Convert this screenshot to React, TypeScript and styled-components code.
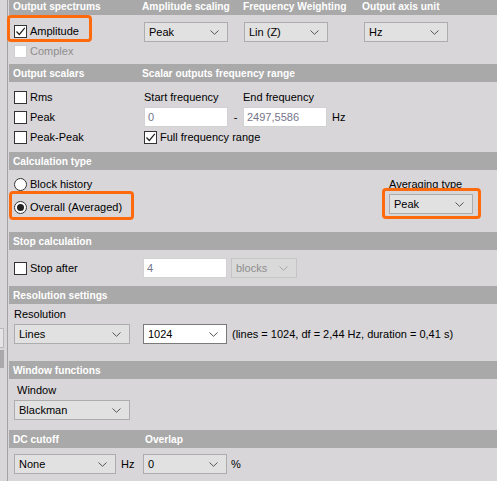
import React from "react";
import styled, { createGlobalStyle } from "styled-components";

const Global = createGlobalStyle`
  html, body { margin: 0; padding: 0; background: #d8d6d9; }
  body { font-family: "Liberation Sans", Arial, sans-serif; font-size: 11px; color: #000; }
  #root { width: 497px; height: 481px; overflow: hidden; }
  * { box-sizing: border-box; }
`;

const Layout = styled.div`
  display: flex;
  gap: 1px;
  height: 481px;
  overflow: hidden;
`;

const Strip = styled.div`
  width: 8px;
  flex: none;
  border-right: 1px solid #a2a2a2;
  display: flex;
  flex-direction: column;
  padding-top: 328px;
`;

const StubBox = styled.div`
  width: 4px;
  height: 20px;
  border: 1px solid #b9b9b9;
  border-left: none;
  background: #e4e4e4;
`;

const StubBar = styled.div`
  width: 4px;
  height: 18px;
  margin-top: 2px;
  background: #a9a9a9;
`;

const Panel = styled.div`
  flex: 1;
  display: flex;
  flex-direction: column;
  min-width: 0;
`;

const Header = styled.div<{ $cols: string; $first?: boolean }>`
  display: grid;
  grid-template-columns: ${(p) => p.$cols};
  align-items: center;
  height: 18px;
  flex: none;
  margin-top: ${(p) => (p.$first ? "-3px" : "0")};
  padding-left: 4px;
  background: #a9a9a9;
  color: #fff;
  font-weight: bold;
  font-size: 10.2px;
  white-space: nowrap;
`;

const Body = styled.div<{ $pad: string }>`
  padding: ${(p) => p.$pad};
  display: flex;
  flex: none;
`;

const Col = styled.div<{ $w?: number; $gap?: number }>`
  display: flex;
  flex-direction: column;
  gap: ${(p) => p.$gap ?? 0}px;
  width: ${(p) => (p.$w ? `${p.$w}px` : "auto")};
  flex: none;
`;

const Row = styled.div<{ $gap?: number }>`
  display: flex;
  align-items: center;
  gap: ${(p) => p.$gap ?? 0}px;
`;

const Line = styled.div<{ $h?: number; $indent?: number; $w?: number }>`
  height: ${(p) => p.$h ?? 20}px;
  line-height: ${(p) => p.$h ?? 20}px;
  padding-left: ${(p) => p.$indent ?? 0}px;
  width: ${(p) => (p.$w ? `${p.$w}px` : "auto")};
  white-space: nowrap;
`;

const Spacer = styled.div`
  flex: 1;
`;

const CheckRow = styled.label<{ $h?: number; $disabled?: boolean }>`
  display: inline-flex;
  align-items: center;
  gap: 3px;
  height: ${(p) => p.$h ?? 20}px;
  color: ${(p) => (p.$disabled ? "#8d8d8d" : "#000")};
  white-space: nowrap;
`;

const Box = styled.span<{ $disabled?: boolean }>`
  width: 13px;
  height: 13px;
  flex: none;
  background: #fff;
  border: 1px solid ${(p) => (p.$disabled ? "#cfcfcf" : "#333")};
  display: inline-flex;
  align-items: center;
  justify-content: center;
`;

const Circle = styled.span`
  width: 13px;
  height: 13px;
  flex: none;
  border-radius: 50%;
  background: #fff;
  border: 1px solid #333;
  display: inline-flex;
  align-items: center;
  justify-content: center;
`;

const Dot = styled.span`
  width: 7px;
  height: 7px;
  border-radius: 50%;
  background: #222;
`;

const Highlight = styled.div<{ $t: number; $r: number; $b: number; $l: number }>`
  position: relative;
  display: inline-flex;
  align-self: flex-start;
  &::after {
    content: "";
    position: absolute;
    top: ${(p) => p.$t}px;
    right: ${(p) => p.$r}px;
    bottom: ${(p) => p.$b}px;
    left: ${(p) => p.$l}px;
    border: 3px solid #ff6a0d;
    border-radius: 4px;
    pointer-events: none;
  }
`;

type Variant = "default" | "edit" | "disabled";

const SelectBox = styled.div<{ $w: number; $variant: Variant }>`
  width: ${(p) => p.$w}px;
  height: 20px;
  flex: none;
  display: flex;
  align-items: center;
  padding: 0 8px 0 4px;
  border: 1px solid
    ${(p) => (p.$variant === "edit" ? "#7a7a7a" : p.$variant === "disabled" ? "#c5c5c5" : "#adadad")};
  background: ${(p) => (p.$variant === "edit" ? "#fff" : p.$variant === "disabled" ? "#d9d9d9" : "#e1e1e1")};
  color: ${(p) => (p.$variant === "disabled" ? "#8d8d8d" : "#000")};
  white-space: nowrap;
`;

const Field = styled.div<{ $w: number }>`
  width: ${(p) => p.$w}px;
  height: 20px;
  flex: none;
  display: flex;
  align-items: center;
  padding-left: 3px;
  background: #fff;
  border: 1px solid #d2d2d2;
  color: #74748a;
`;

const Unit = styled.span<{ $ml?: number; $w?: number }>`
  margin-left: ${(p) => p.$ml ?? 0}px;
  width: ${(p) => (p.$w ? `${p.$w}px` : "auto")};
  flex: none;
  white-space: nowrap;
`;

const Dash = styled.span`
  width: 15px;
  text-align: center;
  flex: none;
`;

const Check = ({ checked }: { checked?: boolean }) => (
  <svg width="11" height="11" viewBox="0 0 11 11">
    {checked && <polyline points="1.5,5.5 4.3,8.5 9.8,1.8" fill="none" stroke="#222" strokeWidth="1.2" />}
  </svg>
);

const Chevron = ({ color = "#555" }: { color?: string }) => (
  <svg width="9" height="5" viewBox="0 0 9 5">
    <polyline points="0.5,0.5 4.5,4.3 8.5,0.5" fill="none" stroke={color} strokeWidth="1" />
  </svg>
);

const Select = ({ value, w, variant = "default" }: { value: string; w: number; variant?: Variant }) => (
  <SelectBox $w={w} $variant={variant}>
    <span>{value}</span>
    <Spacer />
    <Chevron color={variant === "disabled" ? "#a8a8a8" : "#555"} />
  </SelectBox>
);

const Checkbox = ({ label, checked, disabled, h }: { label: string; checked?: boolean; disabled?: boolean; h?: number }) => (
  <CheckRow $h={h} $disabled={disabled}>
    <Box $disabled={disabled}>
      <Check checked={checked} />
    </Box>
    {label}
  </CheckRow>
);

const Radio = ({ label, checked }: { label: string; checked?: boolean }) => (
  <CheckRow>
    <Circle>{checked && <Dot />}</Circle>
    {label}
  </CheckRow>
);

const COLS = "129px 101px 119px 1fr";

export default function App() {
  return (
    <>
      <Global />
      <Layout>
        <Strip>
          <StubBox />
          <StubBar />
        </Strip>
        <Panel>
          <Header $cols={COLS} $first>
            <span>Output spectrums</span>
            <span>Amplitude scaling</span>
            <span>Frequency Weighting</span>
            <span>Output axis unit</span>
          </Header>
          <Body $pad="7px 0 4px 5px">
            <Col $w={130} $gap={2}>
              <Highlight $t={-7} $r={-13} $b={-2} $l={-7}>
                <Checkbox label="Amplitude" checked h={18} />
              </Highlight>
              <Checkbox label="Complex" disabled h={18} />
            </Col>
            <Col $w={100}>
              <Select value="Peak" w={84} />
            </Col>
            <Col $w={120}>
              <Select value="Lin (Z)" w={84} />
            </Col>
            <Col>
              <Select value="Hz" w={84} />
            </Col>
          </Body>

          <Header $cols="129px 1fr">
            <span>Output scalars</span>
            <span>Scalar outputs frequency range</span>
          </Header>
          <Body $pad="5px 0 5px 5px">
            <Col $w={130}>
              <Checkbox label="Rms" />
              <Checkbox label="Peak" />
              <Checkbox label="Peak-Peak" />
            </Col>
            <Col>
              <Row>
                <Line $w={99}>Start frequency</Line>
                <Line>End frequency</Line>
              </Row>
              <Row>
                <Field $w={84}>0</Field>
                <Dash>-</Dash>
                <Field $w={84}>2497,5586</Field>
                <Unit $ml={5}>Hz</Unit>
              </Row>
              <Checkbox label="Full frequency range" checked />
            </Col>
          </Body>

          <Header $cols="1fr">
            <span>Calculation type</span>
          </Header>
          <Body $pad="4px 24px 15px 5px">
            <Col $gap={3}>
              <Radio label="Block history" />
              <Highlight $t={-6} $r={-12} $b={-3} $l={-5}>
                <Radio label="Overall (Averaged)" checked />
              </Highlight>
            </Col>
            <Spacer />
            <Col>
              <Line>Averaging type</Line>
              <Highlight $t={-6} $r={-8} $b={-5} $l={-7}>
                <Select value="Peak" w={84} />
              </Highlight>
            </Col>
          </Body>

          <Header $cols="1fr">
            <span>Stop calculation</span>
          </Header>
          <Body $pad="8px 0 8px 5px">
            <Col $w={129}>
              <Checkbox label="Stop after" />
            </Col>
            <Row $gap={4}>
              <Field $w={84}>4</Field>
              <Select value="blocks" w={66} variant="disabled" />
            </Row>
          </Body>

          <Header $cols="1fr">
            <span>Resolution settings</span>
          </Header>
          <Body $pad="0 0 17px 5px">
            <Col>
              <Line>Resolution</Line>
              <Row $gap={13}>
                <Select value="Lines" w={116} />
                <Row $gap={5}>
                  <Select value="1024" w={84} variant="edit" />
                  <Unit>(lines = 1024, df = 2,44 Hz, duration = 0,41 s)</Unit>
                </Row>
              </Row>
            </Col>
          </Body>

          <Header $cols="1fr">
            <span>Window functions</span>
          </Header>
          <Body $pad="1px 0 10px 5px">
            <Col>
              <Line $indent={3}>Window</Line>
              <Select value="Blackman" w={116} />
            </Col>
          </Body>

          <Header $cols="132px 1fr">
            <span>DC cutoff</span>
            <span>Overlap</span>
          </Header>
          <Body $pad="6px 0 0 5px">
            <Row>
              <Select value="None" w={102} />
              <Unit $ml={5} $w={22}>Hz</Unit>
              <Select value="0" w={84} />
              <Unit $ml={4}>%</Unit>
            </Row>
          </Body>
        </Panel>
      </Layout>
    </>
  );
}
